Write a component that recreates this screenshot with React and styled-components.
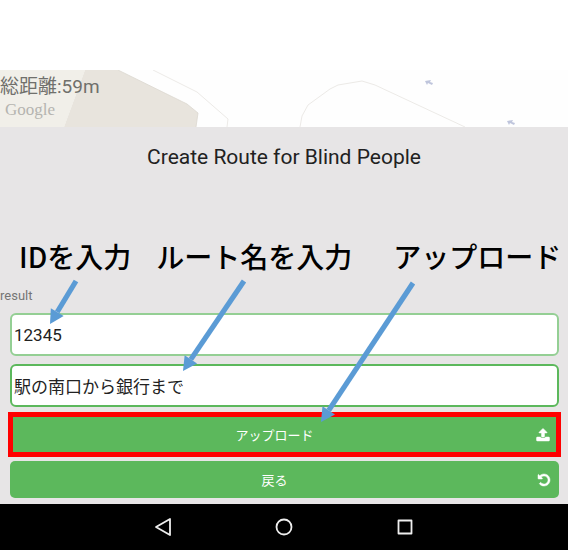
import React from "react";
import styled, { createGlobalStyle } from "styled-components";

const GlobalStyle = createGlobalStyle`
  * { box-sizing: border-box; }
  body {
    margin: 0;
    background: #fff;
    font-family: Roboto, "Noto Sans CJK JP", sans-serif;
  }
`;

const Screen = styled.div`
  display: flex;
  flex-direction: column;
  min-height: 100vh;
  padding: 70px 1px 0 0;
`;

const MapStrip = styled.header`
  position: relative;
  height: 57px;
  overflow: hidden;
  background: #fefefe;
`;

const MapDrawing = styled.svg`
  position: absolute;
  top: 0;
  left: 0;
`;

const MapText = styled.div`
  position: relative;
  display: flex;
  flex-direction: column;
`;

const Distance = styled.span`
  padding-top: 4px;
  font-size: 19px;
  line-height: 26px;
  color: #70706c;
`;

const MapBrand = styled.span`
  padding-left: 5px;
  font-family: "Liberation Serif", serif;
  font-size: 17px;
  line-height: 20px;
  color: #b5b4b0;
`;

const Panel = styled.main`
  position: relative;
  flex: 1;
  background: #e7e5e6;
`;

const Title = styled.h1`
  margin: 0;
  padding-top: 16px;
  font-size: 21px;
  font-weight: 400;
  line-height: 28px;
  text-align: center;
  color: #212121;
`;

const Captions = styled.div`
  display: flex;
  margin-top: 65px;
  padding-left: 19px;
  font-family: "Noto Sans CJK JP", sans-serif;
  font-size: 28px;
  font-weight: 500;
  line-height: 40px;
  white-space: nowrap;
  color: #000;
`;

const Caption = styled.span`
  margin-right: ${({ $gap = 0 }) => $gap}px;
`;

const Result = styled.p`
  margin: 0;
  padding-top: 11px;
  font-size: 13px;
  line-height: 18px;
  color: #757575;
`;

const Form = styled.form`
  display: flex;
  flex-direction: column;
  gap: 8px;
  padding: 8px 9px 6px 10px;
`;

const TextBox = styled.input`
  width: 100%;
  height: 43px;
  padding: 0 2px;
  border: 2px solid ${({ $active }) => ($active ? "#5cb85c" : "#94cf94")};
  border-radius: 6px;
  outline: none;
  background: #fff;
  font: 17px/24px Roboto, "Noto Sans CJK JP", sans-serif;
  color: #222;
`;

const Actions = styled.div`
  display: flex;
  flex-direction: column;
  gap: 4px;
  margin: -3px -2px 0;
`;

const ActionFrame = styled.div`
  padding: ${({ $marked }) => ($marked ? 0 : "0 2px")};
  border: ${({ $marked }) => ($marked ? "5px solid #f00" : "0")};
`;

const ActionButton = styled.button`
  display: grid;
  grid-template-columns: 1fr 20px;
  align-items: center;
  width: 100%;
  height: ${({ $square }) => ($square ? 35 : 37)}px;
  padding: 0 ${({ $square }) => ($square ? 3 : 5)}px;
  border: 0;
  border-radius: ${({ $square }) => ($square ? 0 : 5)}px;
  background: #5cb85c;
  font: 13px/20px "Noto Sans CJK JP", sans-serif;
  color: #fff;
`;

const ActionIcon = styled.span`
  display: flex;
  justify-content: center;
`;

const Arrows = styled.svg`
  position: absolute;
  top: 0;
  left: 0;
  pointer-events: none;
`;

const NavBar = styled.nav`
  display: flex;
  justify-content: center;
  align-items: center;
  gap: 97px;
  height: 46px;
  background: #000;
`;

const NavButton = styled.button`
  display: flex;
  padding: 0;
  border: 0;
  background: none;
  color: #eee;
`;

function NavIcon({ children }) {
  return (
    <svg width="24" height="24" viewBox="0 0 24 24" fill="none" stroke="currentColor" strokeWidth="1.8" strokeLinejoin="round" aria-hidden="true">
      {children}
    </svg>
  );
}

const uploadPath =
  "M1728 1248v320q0 40-28 68t-68 28h-1472q-40 0-68-28t-28-68v-320q0-40 28-68t68-28h427q21 56 70.5 92t110.5 36h256q61 0 110.5-36t70.5-92h427q40 0 68 28t28 68zM1403 600q-17 40-59 40h-256v448q0 26-19 45t-45 19h-256q-26 0-45-19t-19-45v-448h-256q-42 0-59-40-17-39 14-69l448-448q18-19 45-19t45 19l448 448q31 30 14 69z";
const undoPath =
  "M1664 896q0 156-61 298t-164 245-245 164-298 61q-172 0-327-72.5t-264-204.5q-7-10-6.5-22.5t8.5-20.5l137-138q10-9 25-9 16 2 23 12 73 95 179 147t225 52q104 0 198.5-40.5t163.5-109.5 109.5-163.5 40.5-198.5-40.5-198.5-109.5-163.5-163.5-109.5-198.5-40.5q-98 0-188 35.5t-160 101.5l137 138q31 30 14 69-17 40-59 40h-448q-26 0-45-19t-19-45v-448q0-42 40-59 39-17 69 14l130 129q107-101 244.5-156.5t284.5-55.5q156 0 298 61t245 164 164 245 61 298z";

function ButtonIcon({ path }) {
  return (
    <ActionIcon>
      <svg width="14" height="14" viewBox="0 0 1792 1792" fill="currentColor" stroke="currentColor" strokeWidth="60" aria-hidden="true">
        <path d={path} />
      </svg>
    </ActionIcon>
  );
}

const arrows = [
  { x1: 76, y1: 154, x2: 50, y2: 197 },
  { x1: 244, y1: 154, x2: 183, y2: 244 },
  { x1: 413, y1: 156, x2: 321, y2: 295 },
];

function Arrow({ x1, y1, x2, y2 }) {
  const length = Math.hypot(x2 - x1, y2 - y1);
  const ux = (x2 - x1) / length;
  const uy = (y2 - y1) / length;
  const bx = x2 - ux * 14;
  const by = y2 - uy * 14;
  return (
    <g fill="#5b9bd5" stroke="none">
      <line x1={x1} y1={y1} x2={bx} y2={by} stroke="#5b9bd5" strokeWidth="5.2" />
      <polygon points={`${x2},${y2} ${bx - uy * 7.5},${by + ux * 7.5} ${bx + uy * 7.5},${by - ux * 7.5}`} />
    </g>
  );
}

export default function App() {
  return (
    <Screen>
      <GlobalStyle />
      <MapStrip>
        <MapDrawing width="569" height="57" viewBox="0 0 569 57" aria-hidden="true">
          <path d="M0 0H85L64 57H0Z" fill="#f1efe9" />
          <path d="M85 0H118L187 34L198 43L196 57H64Z" fill="#e8e4dd" />
          <path d="M118 0L187 34L198 43L196 57" fill="none" stroke="#dcd8d0" strokeWidth="0.8" />
          <path d="M153 0L197 22L228 49L227 57M300 57L302 46L308 35L330 19L338 15L362 11L375 15L465 57" fill="none" stroke="#eceae7" />
          <g fill="#bfc5dc">
            <path id="way" d="M425 11L431 10L430 12L433 13L432 15L428 13L427 15Z" />
            <use href="#way" x="82" y="40" />
          </g>
        </MapDrawing>
        <MapText>
          <Distance>総距離:59m</Distance>
          <MapBrand>Google</MapBrand>
        </MapText>
      </MapStrip>
      <Panel>
        <Title>Create Route for Blind People</Title>
        <Captions>
          <Caption $gap={25}>IDを入力</Caption>
          <Caption $gap={41}>ルート名を入力</Caption>
          <Caption>アップロード</Caption>
        </Captions>
        <Result>result</Result>
        <Form onSubmit={(event) => event.preventDefault()}>
          <TextBox aria-label="ID" defaultValue="12345" />
          <TextBox aria-label="ルート名" $active defaultValue="駅の南口から銀行まで" />
          <Actions>
            <ActionFrame $marked>
              <ActionButton type="submit" $square>
                <span>アップロード</span>
                <ButtonIcon path={uploadPath} />
              </ActionButton>
            </ActionFrame>
            <ActionFrame>
              <ActionButton type="button">
                <span>戻る</span>
                <ButtonIcon path={undoPath} />
              </ActionButton>
            </ActionFrame>
          </Actions>
        </Form>
        <Arrows width="569" height="377" viewBox="0 0 569 377" aria-hidden="true">
          {arrows.map((arrow) => <Arrow key={arrow.x1} {...arrow} />)}
        </Arrows>
      </Panel>
      <NavBar>
        <NavButton aria-label="Back"><NavIcon><path d="M19 4V20L5 12Z" /></NavIcon></NavButton>
        <NavButton aria-label="Home"><NavIcon><circle cx="12" cy="12" r="7.5" /></NavIcon></NavButton>
        <NavButton aria-label="Overview"><NavIcon><path d="M5.5 5.5H18.5V18.5H5.5Z" /></NavIcon></NavButton>
      </NavBar>
    </Screen>
  );
}
